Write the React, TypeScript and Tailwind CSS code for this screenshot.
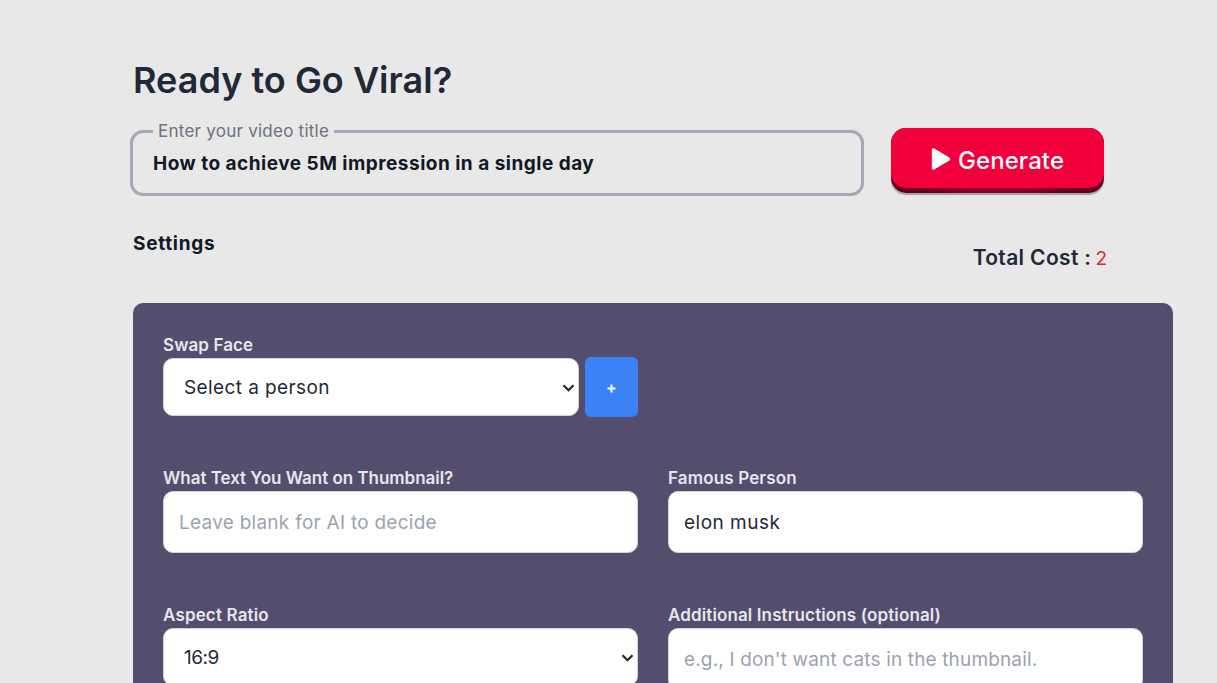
import type { ReactNode } from "react";

function Chevron() {
  return (
    <svg className="h-[8px] w-[13px] shrink-0" viewBox="0 0 13 8" fill="none" stroke="#1f2937" strokeWidth="2.2">
      <path d="M1.5 1.2 6.5 6.2 11.5 1.2" />
    </svg>
  );
}

function Label({ children, className = "" }: { children: ReactNode; className?: string }) {
  return (
    <div className={`flex h-[27px] items-center pt-[2px] text-[17px] leading-none font-semibold whitespace-nowrap text-[#e5e7eb] ${className}`}>
      {children}
    </div>
  );
}

export default function App() {
  return (
    <div className="h-[683px] overflow-hidden bg-[#e8e8e8] pt-[55px] pl-[133px] font-['Inter','Liberation_Sans',sans-serif] text-[#1f2937]">
      <h1 className="h-[51px] whitespace-nowrap text-[36px] leading-[50px] font-semibold">
        <span className="tracking-[0.02px]">Ready to Go Viral?</span>
      </h1>

      <div className="mt-[13px] flex h-[82px] items-start">
        <fieldset className="-ml-[3px] h-[77px] w-[734px] rounded-[13px] border-[3px] border-[#a3a9b5] pl-[20px]">
          <legend className="h-[24px] px-[5px] text-[17px] leading-[24px] whitespace-nowrap text-[#6b7280]">
            <span className="tracking-[0.25px]">Enter your video title</span>
          </legend>
          <div className="mt-[8px] h-[26px] text-[19px] leading-[26px] font-bold whitespace-nowrap text-[#111827]">
            <span className="tracking-[0.49px]">How to achieve 5M impression in a single day</span>
          </div>
        </fieldset>
        <div className="mt-[9px] ml-[27px] h-[65px] w-[213px] rounded-[15px] bg-[linear-gradient(90deg,#5e001e_0%,#66001f_16%,#85002c_35%,#8d0030_50%,#85002c_65%,#66001f_84%,#5e001e_100%)] shadow-[0_2px_1px_#0000004d]">
          <button className="flex h-[60px] w-[213px] items-center justify-center rounded-[15px] bg-[#f2003c] pt-[4px] text-[24px] leading-none font-medium text-white">
            <svg className="mr-[6px] mb-[2px] h-[24px] w-[21px]" viewBox="0 0 21 24" fill="white">
              <path d="M.8 3.2Q.8 .2 3.2 1.6L18 10.2Q20.6 12 18 13.8L3.2 22.4Q.8 23.8 .8 20.8Z" />
            </svg>
            <span className="pt-[2px] tracking-[0.1px]">Generate</span>
          </button>
        </div>
      </div>

      <div className="mt-[29px] flex h-[73px] w-[974px] justify-between">
        <div className="text-[19px] leading-[27px] font-bold text-[#111827]">
          <span className="tracking-[0.7px]">Settings</span>
        </div>
        <div className="flex h-[30px] items-baseline pt-[13px] text-[21px] leading-[30px] font-semibold whitespace-nowrap">
          <span className="tracking-[0.35px]">Total Cost :</span>
          <span className="ml-[4px] text-[19px] font-normal text-[#dc2626]">2</span>
        </div>
      </div>

      <main className="grid h-[420px] w-[1040px] grid-cols-[475px_475px] grid-rows-[133px_137px_137px] gap-x-[30px] rounded-[10px] bg-[#544d6e] pt-[28px] pl-[30px]">
        <section>
          <Label className="tracking-[0.1px]">Swap Face</Label>
          <div className="-mt-[1px] flex items-center gap-[6px]">
            <div className="flex h-[58px] w-[416px] items-center justify-between rounded-[10px] border border-[#d1d5db] bg-white pt-[2px] pr-[3px] pl-[20px] text-[19px]">
              <span className="tracking-[0.4px]">Select a person</span>
              <Chevron />
            </div>
            <button className="flex h-[60px] w-[53px] items-center justify-center rounded-[6px] bg-[#3b82f6] pt-[2px] text-white">
              <svg className="h-[9px] w-[9px]" viewBox="0 0 9 9" stroke="white" strokeWidth="2">
                <path d="M4.5 .5V8.5M.5 4.5H8.5" />
              </svg>
            </button>
          </div>
        </section>
        <div />
        <section>
          <Label className="tracking-[-0.03px]">What Text You Want on Thumbnail?</Label>
          <div className="flex h-[62px] items-center rounded-[10px] border border-[#d1d5db] bg-white px-[15px] pt-[2px] text-[19px] text-[#9ca3af]">
            <span className="tracking-[0.26px]">Leave blank for AI to decide</span>
          </div>
        </section>
        <section>
          <Label className="tracking-[0.15px]">Famous Person</Label>
          <div className="flex h-[62px] items-center rounded-[10px] border border-[#d1d5db] bg-white px-[15px] pt-[2px] text-[19px]">
            <span className="tracking-[0.48px]">elon musk</span>
          </div>
        </section>
        <section>
          <Label className="tracking-[0.15px]">Aspect Ratio</Label>
          <div className="flex h-[58px] items-center justify-between rounded-[10px] border border-[#d1d5db] bg-white pt-[2px] pr-[3px] pl-[20px] text-[19px]">
            <span className="tracking-[-0.5px]">16:9</span>
            <Chevron />
          </div>
        </section>
        <section>
          <Label className="tracking-[0.12px]">Additional Instructions (optional)</Label>
          <div className="flex h-[62px] items-center rounded-[10px] border border-[#d1d5db] bg-white px-[15px] pt-[2px] text-[19px] text-[#9ca3af]">
            <span className="tracking-[0.15px]">e.g., I don't want cats in the thumbnail.</span>
          </div>
        </section>
      </main>
    </div>
  );
}
